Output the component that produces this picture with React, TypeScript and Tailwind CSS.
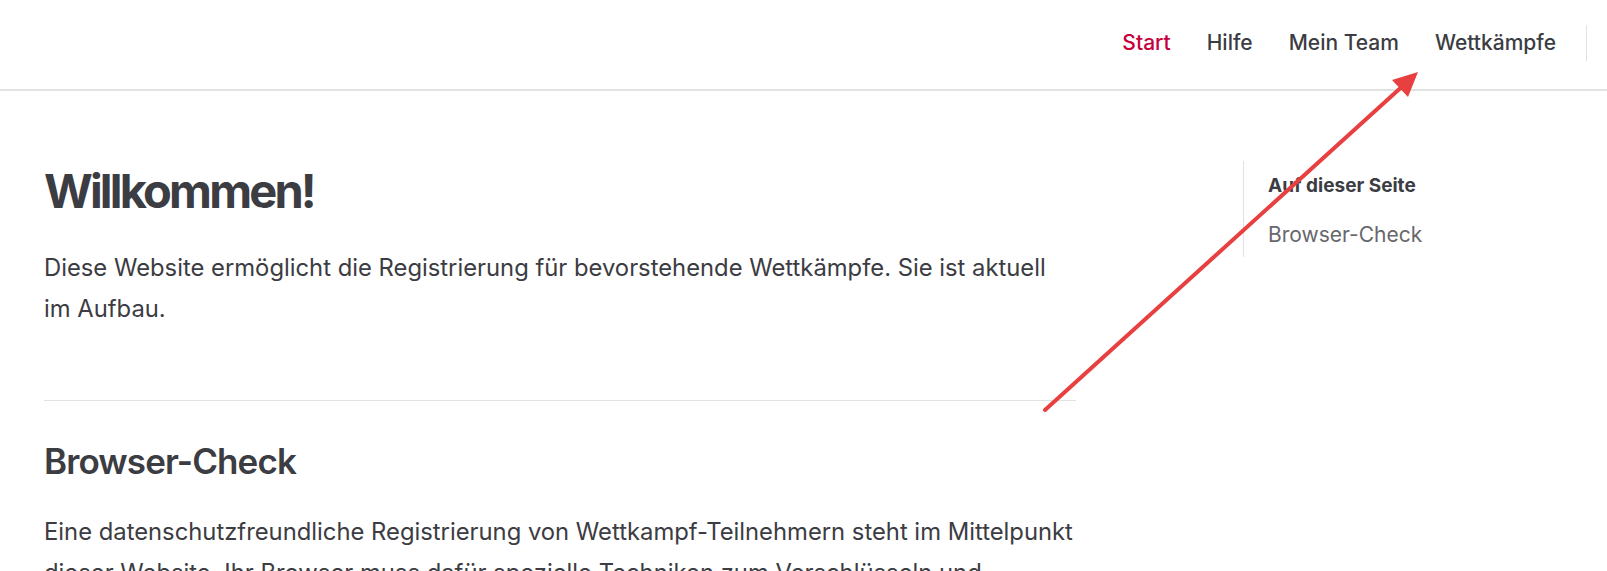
export default function App() {
  const nav = [
    { label: "Start", active: true },
    { label: "Hilfe" },
    { label: "Mein Team" },
    { label: "Wettkämpfe" },
  ];

  return (
    <div
      className="relative h-[571px] overflow-hidden bg-white text-[#3c3c43]"
      style={{ fontFamily: "Inter, 'Noto Sans', sans-serif" }}
    >
      {/* Top bar */}
      <header className="h-[91px] border-b-2 border-[#e2e2e3] flex items-center justify-end pr-[20px] pb-[4px]">
        <nav className="flex items-center">
          {nav.map((item) => (
            <a
              key={item.label}
              className={`px-[18px] text-[21px] font-medium ${item.active ? "text-[#c7003b]" : "text-[#3c3c43]"}`}
            >
              {item.label}
            </a>
          ))}
        </nav>
        <div className="ml-[12px] h-[36px] w-px bg-[#e2e2e3]" />
      </header>

      {/* Body */}
      <div className="flex">
        <main className="w-[1076px] shrink-0 pl-[44px] pt-[72px]">
          <h1 className="text-[47px] font-bold leading-[56px] tracking-[-0.06em]">Willkommen!</h1>
          <p className="mt-[28px] text-[23.8px] leading-[41px]">
            Diese Website ermöglicht die Registrierung für bevorstehende Wettkämpfe. Sie ist aktuell im Aufbau.
          </p>
          <div className="mt-[71px] border-t border-[#e2e2e3]" />
          <h2 className="mt-[38px] text-[35px] font-semibold leading-[44px] tracking-[-0.025em]">Browser-Check</h2>
          <p className="mt-[28px] text-[23.8px] leading-[41px]">
            Eine datenschutzfreundliche Registrierung von Wettkampf-Teilnehmern steht im Mittelpunkt dieser
            Website. Ihr Browser muss dafür spezielle Techniken zum Verschlüsseln und Signieren unterstützen.
          </p>
        </main>

        <aside className="ml-[167px] mt-[70px] h-[96px] border-l border-[#e2e2e3] pl-[24px] pt-[13px]">
          <div className="text-[19px] font-bold leading-[24px]">Auf dieser Seite</div>
          <div className="mt-[25px] text-[21px] leading-[24px] text-[#67676c]">Browser-Check</div>
        </aside>
      </div>

      {/* Annotation arrow */}
      <svg className="pointer-events-none absolute inset-0" width="1607" height="571">
        <line x1="1045" y1="410" x2="1406" y2="83" stroke="#e84040" strokeWidth="4" strokeLinecap="round" />
        <polygon points="1418,72 1392,80 1408,97" fill="#e84040" />
      </svg>
    </div>
  );
}
